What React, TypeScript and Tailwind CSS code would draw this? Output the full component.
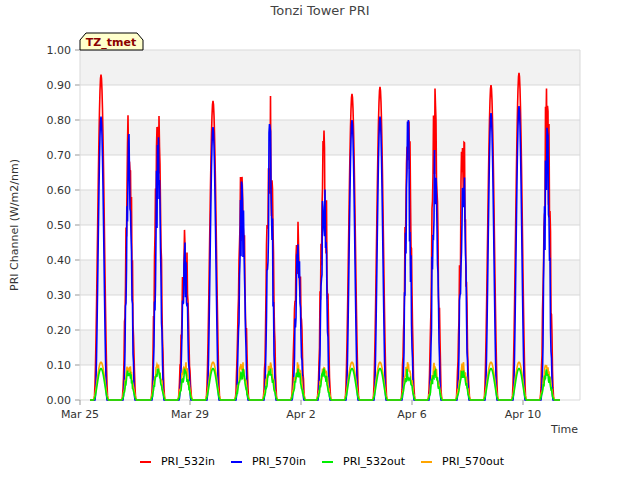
import React from "react";

const X0 = 80, X1 = 580, Y0 = 50, Y1 = 400;
const yv = (v: number) => Y1 - v * 350;
const centers = [101, 129, 158, 185, 213, 242, 270, 298, 324, 352, 380, 408, 435, 463, 491, 519, 547];
const red = [.93, .83, .85, .5, .855, .7, .87, .535, .77, .875, .895, .89, .89, .805, .9, .935, .96];
const blue = [.81, .76, .77, .45, .78, .64, .79, .46, .70, .80, .81, .80, .80, .74, .82, .84, .85];
const noisy = [0, 1, 1, 1, 0, 1, 1, 1, 1, 0, 0, 1, 1, 1, 0, 0, 1];

let seed = 7;
const rnd = () => { seed = (seed * 9301 + 49297) % 233280; return seed / 233280; };

function series(peaks: number[], scale: number, hw: number) {
  seed = 11;
  let d = `M${X0 + 10},${Y1}`;
  centers.forEach((c, i) => {
    const p = peaks[i] * scale;
    d += ` L${c - hw - 1},${Y1}`;
    for (let x = -hw; x <= hw; x += 0.5) {
      const t = Math.cos((x / hw) * Math.PI / 2);
      let v = p * t * t;
      if (noisy[i]) v *= 0.65 + 0.4 * rnd();
      d += ` L${(c + x).toFixed(1)},${yv(Math.min(v, p)).toFixed(1)}`;
    }
    d += ` L${c + hw + 1},${Y1}`;
  });
  d += ` L${X1 - 20},${Y1}`;
  return d;
}

export default function App() {
  const ticks = Array.from({ length: 11 }, (_, i) => i / 10);
  const bands = [0.9, 0.7, 0.5, 0.3, 0.1];
  const xl = [["Mar 25", 80], ["Mar 29", 190], ["Apr 2", 301], ["Apr 6", 412], ["Apr 10", 523]] as const;
  return (
    <div className="w-[640px] h-[480px] bg-white relative" style={{ fontFamily: "'DejaVu Sans', sans-serif" }}>
      <svg width="640" height="440" className="block">
        <text x="320" y="15" textAnchor="middle" fontSize="13" fill="#444">Tonzi Tower PRI</text>
        <rect x={X0} y={Y0} width={X1 - X0} height={Y1 - Y0} fill="#fff" />
        {bands.map(b => <rect key={b} x={X0} y={yv(b + 0.1)} width={X1 - X0} height={35} fill="#f2f2f2" />)}
        {ticks.map(t => (
          <g key={t}>
            <line x1={X0} x2={X1} y1={yv(t)} y2={yv(t)} stroke="#d9d9d9" strokeWidth="1" />
            <line x1={X0 - 5} x2={X0} y1={yv(t)} y2={yv(t)} stroke="#999" />
            <text x={X0 - 9} y={yv(t) + 4} textAnchor="end" fontSize="11" fill="#333">{t.toFixed(2)}</text>
          </g>
        ))}
        <line x1={X0} x2={X0} y1={Y0} y2={Y1} stroke="#d9d9d9" />
        <line x1={X1} x2={X1} y1={Y0} y2={Y1} stroke="#d9d9d9" />
        {xl.map(([l, x]) => (
          <g key={l}>
            <line x1={x} x2={x} y1={Y1} y2={Y1 + 5} stroke="#999" />
            <text x={x} y={Y1 + 18} textAnchor="middle" fontSize="11" fill="#333">{l}</text>
          </g>
        ))}
        <text x="578" y="433" textAnchor="end" fontSize="11" fill="#333">Time</text>
        <text transform="translate(18,225) rotate(-90)" textAnchor="middle" fontSize="11" fill="#333">PRI Channel (W/m2/nm)</text>
        <path d={series(red, 1, 7)} fill="none" stroke="#ff0000" strokeWidth="1.6" />
        <path d={series(blue, 1, 6)} fill="none" stroke="#0000ff" strokeWidth="1.6" />
        <path d={series(red.map(() => 0.108), 1, 8)} fill="none" stroke="#ffa500" strokeWidth="1.6" />
        <path d={series(red.map(() => 0.09), 1, 7.5)} fill="none" stroke="#00ee00" strokeWidth="1.6" />
        <path d="M80,50 L80,40 L86,33 L137,33 L143,40 L143,50 Z" fill="#ffffcc" stroke="#000" />
        <text x="111" y="46" textAnchor="middle" fontSize="11" fontWeight="bold" fill="#8b0000">TZ_tmet</text>
      </svg>
      <div className="flex justify-center items-center gap-[16px] text-[11px] text-black mt-[14px] ml-[4px]">
        {[["PRI_532in", "#ff0000"], ["PRI_570in", "#0000ff"], ["PRI_532out", "#00ee00"], ["PRI_570out", "#ffa500"]].map(([n, c]) => (
          <div key={n} className="flex items-center gap-[10px]">
            <span className="inline-block w-[11px] h-[2px]" style={{ background: c }} />
            <span>{n}</span>
          </div>
        ))}
      </div>
    </div>
  );
}
